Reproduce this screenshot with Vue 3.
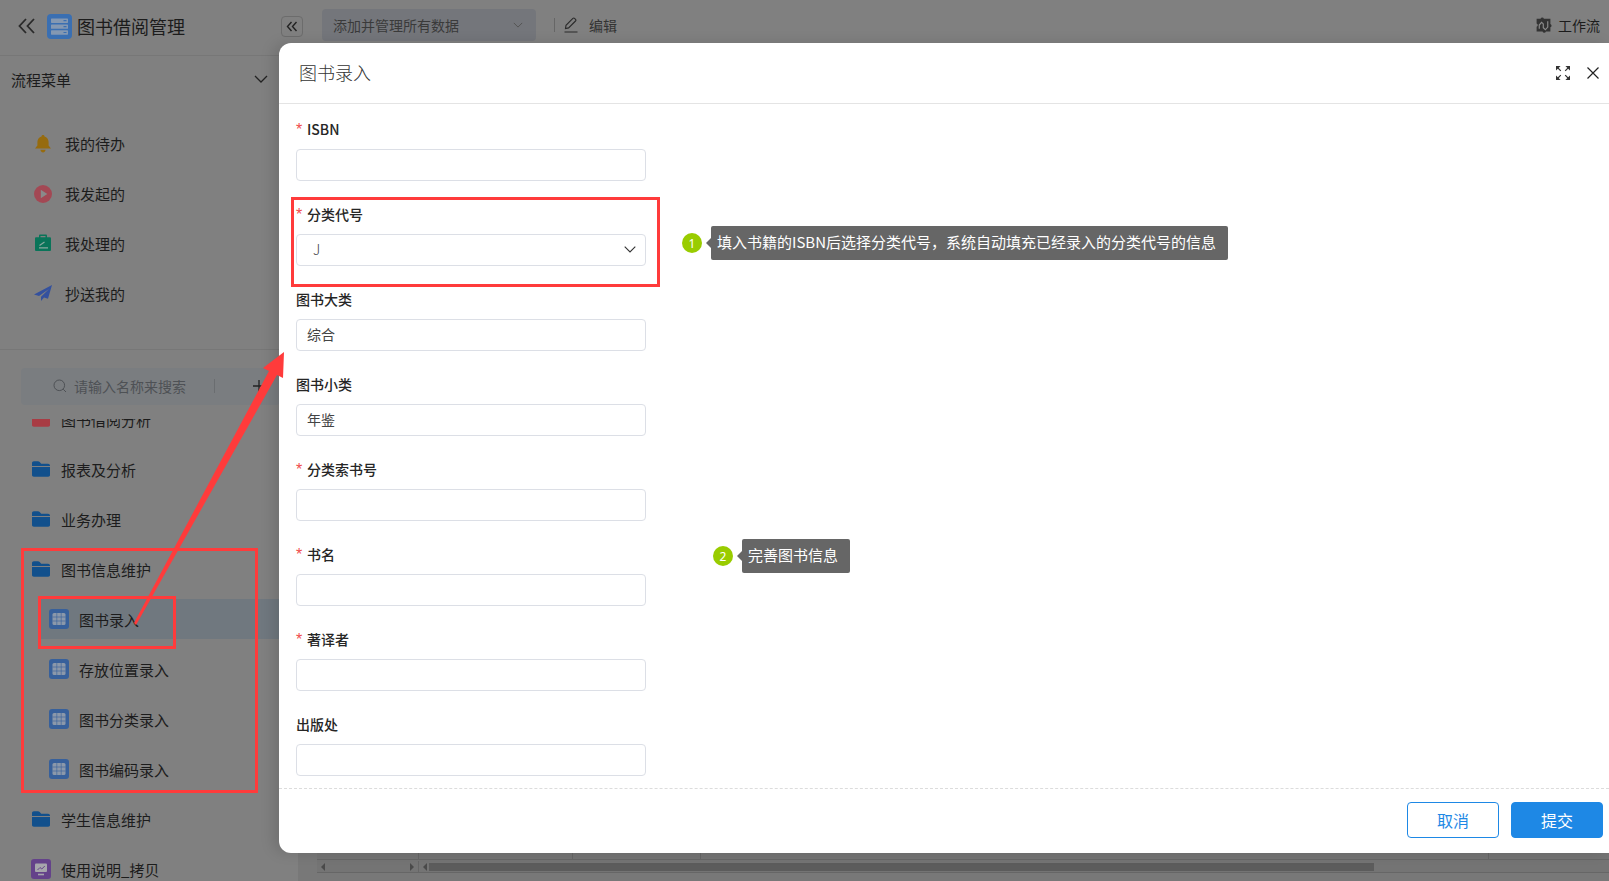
<script setup>
const todo = [
  { text: '我的待办', icon: 'bell' },
  { text: '我发起的', icon: 'play' },
  { text: '我处理的', icon: 'done' },
  { text: '抄送我的', icon: 'plane' }
]
const tree = [
  { text: '图书借阅分析', kind: 'folder', red: true },
  { text: '报表及分析', kind: 'folder' },
  { text: '业务办理', kind: 'folder' },
  { text: '图书信息维护', kind: 'folder' },
  { text: '图书录入', kind: 'sheet', active: true },
  { text: '存放位置录入', kind: 'sheet' },
  { text: '图书分类录入', kind: 'sheet' },
  { text: '图书编码录入', kind: 'sheet' },
  { text: '学生信息维护', kind: 'folder' },
  { text: '使用说明_拷贝', kind: 'screen' }
]
const fields = [
  { label: 'ISBN', required: true },
  { label: '分类代号', required: true, value: 'J', select: true },
  { label: '图书大类', value: '综合' },
  { label: '图书小类', value: '年鉴' },
  { label: '分类索书号', required: true },
  { label: '书名', required: true },
  { label: '著译者', required: true },
  { label: '出版处' }
]
</script>

<template>
  <div class="page">
    <aside class="side">
      <div class="brand">
        <svg class="dbl" viewBox="0 0 18 16"><path d="M8 1 1.500 8 8 15M16 1 9.500 8 16 15" /></svg>
        <svg class="logo" viewBox="0 0 25 25">
          <rect width="25" height="25" rx="4" fill="#3a6fb2" />
          <rect x="4" y="4.500" width="17" height="4.400" rx=".6" fill="#8498b2" />
          <rect x="4" y="10.400" width="17" height="4.400" rx=".6" fill="#8498b2" />
          <rect x="4" y="16.300" width="17" height="4.400" rx=".6" fill="#8498b2" />
          <path d="M16.500 6.700h3M16.500 12.600h3M16.500 18.500h3" stroke="#3a6fb2" stroke-width="1.200" />
        </svg>
        <span class="brand-name">图书借阅管理</span>
      </div>

      <div class="flow-head">
        <span>流程菜单</span>
        <svg class="chev" viewBox="0 0 14 8"><path d="M1 1l6 6 6-6" /></svg>
      </div>

      <ul class="todo">
        <li v-for="t in todo" :key="t.text">
          <svg v-if="t.icon === 'bell'" class="ti" viewBox="0 0 18 18">
            <path d="M9 0c.9 0 1.500.6 1.500 1.400C13 2.100 14.600 4.300 14.600 7v3.600l2.400 3H1l2.400-3V7c0-2.700 1.600-4.900 4.100-5.600C7.500.6 8.100 0 9 0z" fill="#966b0e" />
            <path d="M6.400 14.700h5.200C11.400 16.300 10.300 17.400 9 17.400s-2.400-1.100-2.600-2.700z" fill="#966b0e" />
          </svg>
          <svg v-else-if="t.icon === 'play'" class="ti" viewBox="0 0 18 18">
            <circle cx="9" cy="9" r="9" fill="#a34854" />
            <path d="M6.800 4.800v8.400l6.500-4.200z" fill="#8a8a8a" />
          </svg>
          <svg v-else-if="t.icon === 'done'" class="ti" viewBox="0 0 18 18">
            <path d="M5 3.200V1.800C5 1 5.500.6 6.200.6h5.600c.7 0 1.200.4 1.200 1.200v1.400h2.700c.8 0 1.300.5 1.300 1.300v11.200c0 .8-.5 1.300-1.300 1.300H2.300c-.8 0-1.300-.5-1.300-1.300V4.500c0-.8.5-1.300 1.300-1.300zM6.500 3.200h5V2h-5z" fill="#0a7459" />
            <path d="M5 13.800h9M5.500 11.500l5-3.500" stroke="#8aa89f" stroke-width="1.200" fill="none" />
          </svg>
          <svg v-else class="ti" viewBox="0 0 18 18">
            <path d="M18 1 0 10.500l5 1.500L15 5 7 12.800V17l3-3.400 4 1.200z" fill="#34519e" />
          </svg>
          <span>{{ t.text }}</span>
        </li>
      </ul>

      <div class="search">
        <svg class="si" viewBox="0 0 14 14"><circle cx="6.300" cy="6.300" r="5.300" /><path d="M10.200 10.200l2.800 2.800" /></svg>
        <span class="ph">请输入名称来搜索</span>
        <i class="vline"></i>
        <svg class="plus" viewBox="0 0 12 12"><path d="M6 0v12M0 6h12" /></svg>
      </div>

      <div class="tree-clip">
        <ul class="tree">
          <li v-for="n in tree" :key="n.text" class="node" :class="{ sub: n.kind === 'sheet', on: n.active }">
            <svg v-if="n.kind === 'folder'" class="fold" viewBox="0 0 18 16">
              <path d="M0 2.200C0 1 .8.300 1.900.300h4c.8 0 1.300.3 1.800.8l1.500 1.600h6.900c1.100 0 1.900.8 1.900 1.900v.4H0z" :fill="n.red ? '#a83c44' : '#12508c'" />
              <path d="M0 6h18v8c0 1-.8 1.700-1.800 1.700H1.800C.8 15.700 0 15 0 14z" :fill="n.red ? '#a83c44' : '#12508c'" />
            </svg>
            <svg v-else-if="n.kind === 'sheet'" class="sheet" viewBox="0 0 20 20">
              <rect width="20" height="20" rx="3" fill="#37609b" />
              <rect x="3.500" y="4" width="13" height="12" rx="1.500" fill="#8b98aa" />
              <path d="M7.800 4v12M12.200 4v12M3.500 8h13M3.500 12h13" stroke="#37609b" stroke-width=".6" />
            </svg>
            <svg v-else class="screen" viewBox="0 0 20 20">
              <rect width="20" height="20" rx="3" fill="#64428a" />
              <rect x="4" y="4.500" width="12" height="8.500" rx="1" fill="#a6a6ac" />
              <path d="M6.500 11l2.500-2.500 1.800 1.500 3-3" stroke="#64428a" fill="none" />
              <path d="M7 15.500h6" stroke="#a6a6ac" stroke-width="1.600" />
            </svg>
            <span>{{ n.text }}</span>
          </li>
        </ul>
      </div>
    </aside>

    <main class="main">
      <header class="top">
        <button class="collapse">
          <svg viewBox="0 0 12 11"><path d="M5.500 1 1.500 5.500l4 4.500M10.500 1 6.500 5.500l4 4.500" /></svg>
        </button>
        <div class="view">
          <span>添加并管理所有数据</span>
          <svg viewBox="0 0 12 7"><path d="M1 1l5 5 5-5" /></svg>
        </div>
        <i class="top-line"></i>
        <div class="edit">
          <svg viewBox="0 0 16 16"><path d="M1.500 15h13M2.500 11.500l.5-3.200 6.900-6.900c.5-.5 1.200-.5 1.700 0l.9.9c.5.5.5 1.200 0 1.700L5.600 10.900z" /></svg>
          <span>编辑</span>
        </div>
        <div class="wf">
          <svg viewBox="0 0 16 17">
            <path d="M1.500 2.500h3.700a1.700 1.700 0 0 1 3.200 0h6.100v5a1.700 1.700 0 0 1 0 3.200v4h-4.200a1.700 1.700 0 0 1-3.200 0H1.500v-4.500a1.700 1.700 0 0 0 0-3.200z" fill="#333" />
            <path d="M4 12V8.500l2.200-2.500 1.600 1.500v3.500l2 2 2.200-2.500V5" stroke="#8c8c8c" stroke-width="1.100" fill="none" />
          </svg>
          <span>工作流</span>
        </div>
      </header>
      <div class="content">
        <div class="grid">
          <div class="grid-row">
            <i class="c1"></i><i class="c2"></i><i class="c3"></i><i class="c4"></i>
          </div>
          <div class="bars">
            <div class="bar-l">
              <span class="tri left"></span><span class="tri right"></span>
            </div>
            <div class="bar-r">
              <span class="tri left"></span><span class="thumb"></span>
            </div>
          </div>
        </div>
      </div>
    </main>

    <section class="modal">
      <header class="m-head">
        <span class="m-title">图书录入</span>
        <svg class="expand" viewBox="0 0 14 14">
          <path d="M1 1l3.800 3.800M13 1 9.200 4.800M1 13l3.800-3.800M13 13 9.200 9.200" />
          <path class="fill" d="M0 0h4.600L0 4.600zM14 0v4.600L9.400 0zM0 14V9.400L4.600 14zM14 14H9.400L14 9.400z" />
        </svg>
        <svg class="close" viewBox="0 0 12 12"><path d="M.5.500l11 11M11.500.500l-11 11" /></svg>
      </header>
      <div class="m-body">
        <div v-for="f in fields" :key="f.label" class="field">
          <label><em v-if="f.required">*</em>{{ f.label }}</label>
          <div class="ctl" :class="{ sel: f.select }">
            <span>{{ f.value }}</span>
            <svg v-if="f.select" viewBox="0 0 12 7"><path d="M.7.700 6 6 11.300.700" /></svg>
          </div>
        </div>
      </div>
      <footer class="m-foot">
        <button class="ghost">取消</button>
        <button class="solid">提交</button>
      </footer>
    </section>

    <svg class="marks" viewBox="0 0 1609 881">
      <rect x="22.500" y="549.500" width="234" height="242" />
      <rect x="39.500" y="597.500" width="135" height="50" />
      <rect x="292.500" y="198.500" width="366" height="87" />
      <path class="arrow" d="M284 352 283 378 277 375 136 625 134 623 269 371 263 368z" />
    </svg>

    <div class="tip tip1"><b>1</b><span>填入书籍的ISBN后选择分类代号，系统自动填充已经录入的分类代号的信息</span></div>
    <div class="tip tip2"><b>2</b><span>完善图书信息</span></div>
  </div>
</template>

<style>
html, body { margin: 0; background: #808080; }
</style>

<style scoped>
* { box-sizing: border-box; }
ul { list-style: none; margin: 0; padding: 0; }
.page {
  position: relative; display: flex; width: 1609px; height: 881px; overflow: hidden;
  background: #808080; color: #1c1c1c;
  font-family: "Noto Sans CJK SC", "Noto Sans", sans-serif; font-size: 15px;
}
.side { width: 298px; flex: none; display: flex; flex-direction: column; }
.brand {
  height: 56px; flex: none; display: flex; align-items: center; padding: 0 0 3px 18px;
  border-bottom: 1px solid #777;
}
.dbl { width: 18px; height: 16px; fill: none; stroke: #2a2a2a; stroke-width: 1.800; }
.logo { width: 25px; height: 25px; margin-left: 11px; }
.brand-name { margin-left: 5px; font-size: 18px; line-height: 24px; }
.flow-head {
  height: 48px; flex: none; display: flex; align-items: center; justify-content: space-between;
  padding: 0 30px 2px 11px;
}
.chev { width: 14px; height: 8px; fill: none; stroke: #222; stroke-width: 1.300; }
.todo { padding: 15px 0 31px; border-bottom: 1px solid #777; flex: none; }
.todo li { height: 49.800px; display: flex; align-items: center; padding-left: 34px; }
.ti { width: 18px; height: 18px; margin-right: 13px; }
.search {
  flex: none; margin: 18px 18px 0 21px; height: 37px; background: #7a7d80; border-radius: 4px;
  display: flex; align-items: center; padding: 0 0 2px 32px; font-size: 14px; color: #4e5155;
}
.si { width: 14px; height: 14px; fill: none; stroke: #4e5155; stroke-width: 1; margin-right: 7px; }
.vline { width: 1px; height: 14px; background: #6a6d70; margin: 0 38px 0 28px; }
.plus { width: 12px; height: 12px; fill: none; stroke: #222; stroke-width: 1.300; }
.tree-clip { margin-top: 14px; flex: 1; overflow: hidden; }
.tree { margin-top: -25px; display: flex; flex-direction: column; }
.node { height: 50px; flex: none; display: flex; align-items: center; padding-left: 32px; }
.node.sub { height: 40px; margin: 5px 0 5px 38px; padding-left: 11px; }
.node.on { background: #70787f; }
.fold { width: 18px; height: 16px; margin-right: 11px; }
.sheet { width: 20px; height: 20px; margin-right: 10px; }
.screen { width: 20px; height: 20px; margin: 0 10px 0 -1px; }

.main { flex: 1; display: flex; flex-direction: column; background: #787878; min-width: 0; }
.top {
  height: 56px; flex: none; display: flex; align-items: flex-start; background: #808080;
  padding: 9px 9px 0 0; font-size: 14px; color: #3a3a3a;
}
.collapse {
  margin: 7px 0 0 -17px; width: 22px; height: 21px; padding: 0; background: none;
  border: 1px solid #6c6c6c; border-radius: 4px; display: flex; align-items: center; justify-content: center;
}
.collapse svg { width: 12px; height: 11px; fill: none; stroke: #222; stroke-width: 1.400; }
.view {
  margin-left: 19px; width: 214px; height: 32px; background: #74767b; border-radius: 4px;
  display: flex; align-items: center; justify-content: space-between; padding: 0 13px 0 11px;
}
.view svg { width: 10px; height: 6px; fill: none; stroke: #555; stroke-width: 1.200; }
.top-line { width: 1px; height: 14px; background: #666; margin: 9px 8px 0 18px; }
.edit { display: flex; align-items: center; height: 32px; color: #333; }
.edit svg { width: 16px; height: 16px; fill: none; stroke: #2a2a2a; stroke-width: 1.100; margin-right: 10px; }
.wf { margin-left: auto; display: flex; align-items: center; height: 32px; color: #1c1c1c; }
.wf svg { width: 17px; height: 18px; margin-right: 6px; }

.content { flex: 1; display: flex; flex-direction: column; justify-content: flex-end; padding: 0 0 8px 19px; }
.grid { border-bottom: 1px solid #666; background: #747474; }
.grid-row { display: flex; height: 9px; border-bottom: 1px solid #666; }
.grid-row i { flex: none; border-right: 1px solid #666; }
.c1 { width: 102px; } .c2 { width: 154px; } .c3 { width: 128px; } .c4 { width: 788px; }
.bars { display: flex; height: 11px; margin-top: 1px; }
.bar-l { width: 102px; display: flex; justify-content: space-between; align-items: center; padding: 0 4px; border-right: 1px solid #666; }
.bar-r { flex: 1; display: flex; align-items: center; padding-left: 4px; }
.thumb { margin-left: 2px; width: 945px; height: 8px; background: #5c5c5c; }
.tri { width: 0; height: 0; border-top: 4px solid transparent; border-bottom: 4px solid transparent; }
.tri.left { border-right: 4px solid #4a4a4a; }
.tri.right { border-left: 4px solid #4a4a4a; }

.modal {
  position: absolute; left: 279px; top: 43px; right: 0; height: 810px; background: #fff;
  border-radius: 12px 0 0 12px; display: flex; flex-direction: column; color: #262626;
  box-shadow: -6px 0 14px rgba(0, 0, 0, .12);
}
.m-head {
  height: 61px; flex: none; display: flex; align-items: center; padding: 0 10px 0 20px;
  border-bottom: 1px solid #e4e4e4;
}
.m-title { font-size: 18px; color: #333; flex: 1; line-height: 58px; height: 60px; font-weight: 300; }
.expand { width: 14px; height: 14px; fill: none; stroke: #333; stroke-width: 1.200; margin-right: 17px; }
.expand .fill { fill: #333; stroke: none; }
.close { width: 12px; height: 12px; fill: none; stroke: #222; stroke-width: 1.200; }
.m-body { flex: 1; overflow: hidden; padding: 16px 0 0 17px; }
.field { height: 85px; width: 350px; }
.field label { display: block; height: 20px; line-height: 18px; font-size: 14px; font-weight: 500; color: #262626; }
.field em {
  font-family: "Liberation Sans", sans-serif; font-style: normal; font-weight: 400; font-size: 16px;
  color: #f04c4c; display: inline-block; width: 11px;
}
.ctl {
  margin-top: 9px; height: 32px; border: 1px solid #dcdfe6; border-radius: 4px; padding: 0 10px 2px;
  display: flex; align-items: center; justify-content: space-between; font-size: 14px; color: #444;
}
.ctl.sel { padding: 0 9px 2px 16px; font-size: 14px; font-weight: 300; }
.ctl svg { width: 12px; height: 7px; fill: none; stroke: #333; stroke-width: 1.100; }
.m-foot {
  height: 65px; flex: none; border-top: 1px dashed #dcdcdc; display: flex; justify-content: flex-end;
  gap: 12px; padding: 13px 6px 0 0;
}
.m-foot button {
  width: 92px; height: 36px; border-radius: 4px; font: inherit; font-size: 16px; border: 1px solid #1e88e5;
  padding: 0;
}
.ghost { background: #fff; color: #1e88e5; }
.solid { background: #1e88e5; color: #fff; }

.marks { position: absolute; inset: 0; width: 1609px; height: 881px; pointer-events: none; }
.marks rect { fill: none; stroke: #ff3b3b; stroke-width: 3; }
.marks .arrow { fill: #ff3b3b; }

.tip { position: absolute; display: flex; align-items: center; color: #fff; height: 34px; }
.tip1 { left: 682px; top: 226px; }
.tip2 { left: 713px; top: 539px; }
.tip b {
  width: 20px; height: 20px; border-radius: 50%; background: #9c0; font-weight: 400; font-size: 12px;
  font-family: "Noto Sans", sans-serif;
  display: flex; align-items: center; justify-content: center; margin-right: 9px;
}
.tip span {
  position: relative; height: 34px; line-height: 32px; padding: 0 12px 0 6px; background: #666;
  border-radius: 2px; font-size: 15px; white-space: nowrap;
}
.tip span::before {
  content: ""; position: absolute; left: -5px; top: 12px; border-top: 5px solid transparent;
  border-bottom: 5px solid transparent; border-right: 5px solid #666;
}
</style>
